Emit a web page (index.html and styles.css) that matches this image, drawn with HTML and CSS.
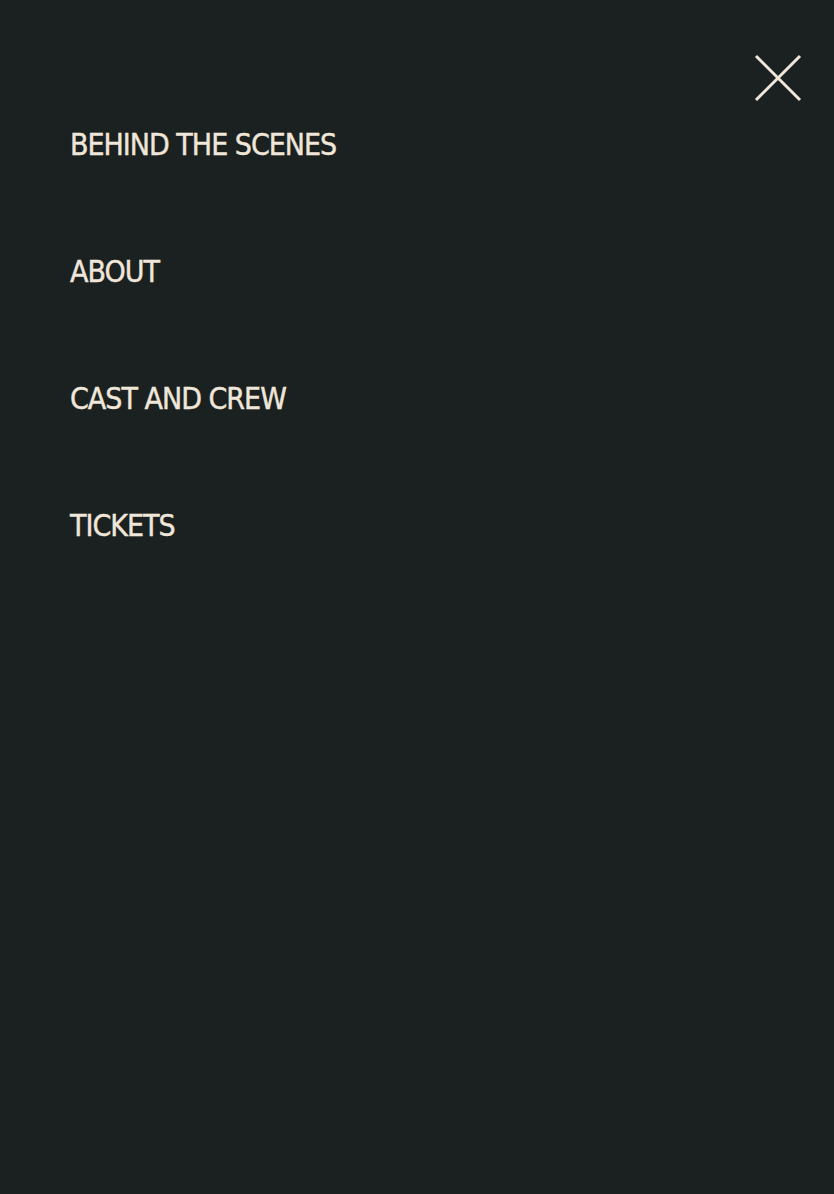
FILE: index.html
```html
<!DOCTYPE html>
<html>
<head>
<meta charset="utf-8">
<link rel="stylesheet" href="styles.css">
</head>
<body>
<div class="menu">
  <button class="close" aria-label="Close">
    <svg width="48" height="48" viewBox="0 0 48 48"><path d="M2 2 L46 46 M46 2 L2 46" stroke="#f0e6da" stroke-width="3" fill="none"/></svg>
  </button>
  <nav class="links">
    <a class="link" href="#">BEHIND THE SCENES</a>
    <a class="link" href="#">ABOUT</a>
    <a class="link" href="#">CAST AND CREW</a>
    <a class="link" href="#">TICKETS</a>
  </nav>
</div>
</body>
</html>
```
FILE: styles.css
```css
html, body {
  margin: 0;
  padding: 0;
  background: #1b2121;
  height: 100%;
}
.menu {
  position: relative;
  min-height: 1194px;
  box-sizing: border-box;
  padding: 127px 0 0 70px;
}
.close {
  position: absolute;
  top: 54px;
  right: 32px;
  background: none;
  border: 0;
  padding: 0;
  width: 48px;
  height: 48px;
}
.close svg { display: block; }
.links {
  display: flex;
  flex-direction: column;
  gap: 91px;
}
.link {
  font-family: "DejaVu Sans Condensed", "DejaVu Sans", sans-serif;
  font-stretch: condensed;
  font-size: 30px;
  font-weight: 500;
  letter-spacing: -1px;
  -webkit-text-stroke: 0.4px #f0e6da;
  line-height: 36px;
  color: #f0e6da;
  text-decoration: none;
  align-self: flex-start;
}
```
